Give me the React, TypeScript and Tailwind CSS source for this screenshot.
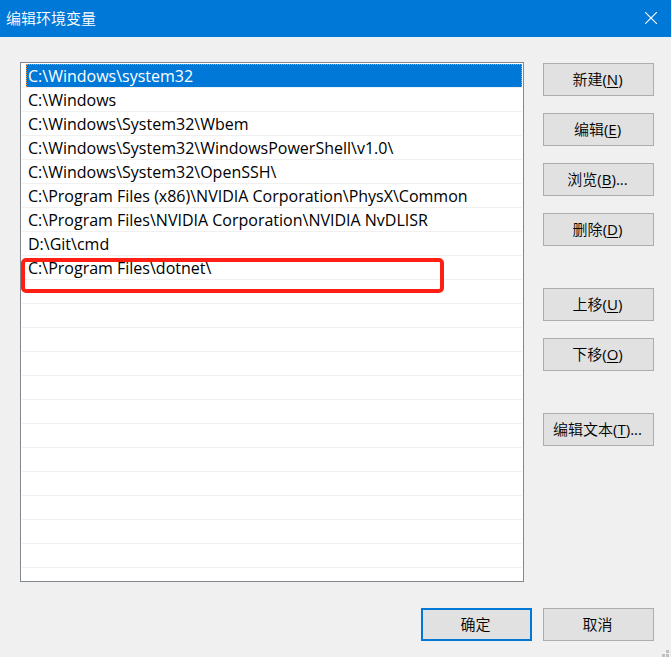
import { useState } from "react";

const paths = [
  "C:\\Windows\\system32",
  "C:\\Windows",
  "C:\\Windows\\System32\\Wbem",
  "C:\\Windows\\System32\\WindowsPowerShell\\v1.0\\",
  "C:\\Windows\\System32\\OpenSSH\\",
  "C:\\Program Files (x86)\\NVIDIA Corporation\\PhysX\\Common",
  "C:\\Program Files\\NVIDIA Corporation\\NVIDIA NvDLISR",
  "D:\\Git\\cmd",
  "C:\\Program Files\\dotnet\\",
];

const ROW_COUNT = 21;
const MARKED_ROW = 8;

type ActionButtonProps = {
  label: string;
  accessKey?: string;
  suffix?: string;
  primary?: boolean;
};

function ActionButton({ label, accessKey, suffix, primary }: ActionButtonProps) {
  return (
    <button
      type="button"
      className={
        primary
          ? "h-[33px] w-[111px] shrink-0 whitespace-nowrap border-2 border-[#0078d7] bg-[#e1e1e1] pr-0.5 pb-0.5"
          : "h-[33px] w-[111px] shrink-0 whitespace-nowrap border border-[#adadad] bg-[#e1e1e1] pr-0.5 pb-0.5 hover:border-[#0078d7] hover:bg-[#e5f1fb]"
      }
    >
      {label}
      {accessKey && (
        <span className="font-normal">
          (<span className="underline underline-offset-2">{accessKey}</span>){suffix}
        </span>
      )}
    </button>
  );
}

export default function App() {
  const [selected, setSelected] = useState(0);
  const rows = Array.from({ length: ROW_COUNT }, (_, i) => paths[i] ?? "");

  return (
    <div className="relative flex min-h-screen flex-col bg-[#f0f0f0] font-['Open_Sans','Noto_Sans_CJK_SC',sans-serif] text-[15px] leading-5 font-[350] text-black">
      <header className="flex h-[37px] shrink-0 items-center justify-between bg-[#0078d7] pb-px pl-1.5 text-white">
        <h1>编辑环境变量</h1>
        <button type="button" aria-label="关闭" className="flex h-full w-10 items-center justify-center">
          <svg className="size-3" viewBox="0 0 12 12" fill="none" stroke="currentColor" strokeWidth="1.1">
            <path d="M0 0l12 12M12 0L0 12" />
          </svg>
        </button>
      </header>

      <main className="flex flex-1 flex-col px-5 pt-[25px] pr-[17px] pb-4">
        <div className="flex flex-1 gap-[19px]">
          <ul
            role="listbox"
            aria-label="编辑环境变量"
            className="min-w-0 flex-1 border border-[#828790] bg-white px-px pt-px pb-3 text-base leading-[22px] font-normal"
          >
            {rows.map((path, i) => (
              <li
                key={i}
                role="option"
                aria-selected={path !== "" && i === selected}
                onClick={() => path && setSelected(i)}
                className="relative h-6 border-b border-[#f0f0f0] pl-1"
              >
                <div
                  className={
                    path && i === selected
                      ? "h-full truncate border border-b-0 border-dotted border-[#ff8728] bg-[#0078d7] pl-px text-white"
                      : "h-full truncate border border-b-0 border-transparent pl-px"
                  }
                >
                  {path}
                </div>
                {i === MARKED_ROW && (
                  <span className="pointer-events-none absolute top-0.5 -left-px z-10 h-[35px] w-[423px] rounded-[5px] border-4 border-[#ff1f14]" />
                )}
              </li>
            ))}
          </ul>

          <div className="flex flex-col gap-[42px] pt-px">
            <div className="flex flex-col gap-[17px]">
              <ActionButton label="新建" accessKey="N" />
              <ActionButton label="编辑" accessKey="E" />
              <ActionButton label="浏览" accessKey="B" suffix="..." />
              <ActionButton label="删除" accessKey="D" />
            </div>
            <div className="flex flex-col gap-[17px]">
              <ActionButton label="上移" accessKey="U" />
              <ActionButton label="下移" accessKey="O" />
            </div>
            <ActionButton label="编辑文本" accessKey="T" suffix="..." />
          </div>
        </div>

        <div className="mt-[26px] flex justify-end gap-[11px]">
          <ActionButton label="确定" primary />
          <ActionButton label="取消" />
        </div>
      </main>

      <svg className="absolute right-0.5 bottom-0 h-[7px] w-[7px]" viewBox="0 0 7 7" fill="#bfbfbf" aria-hidden="true">
        <path d="M4 0h3v3h-3zM0 4h3v3h-3zM4 4h3v3h-3z" />
      </svg>
    </div>
  );
}
